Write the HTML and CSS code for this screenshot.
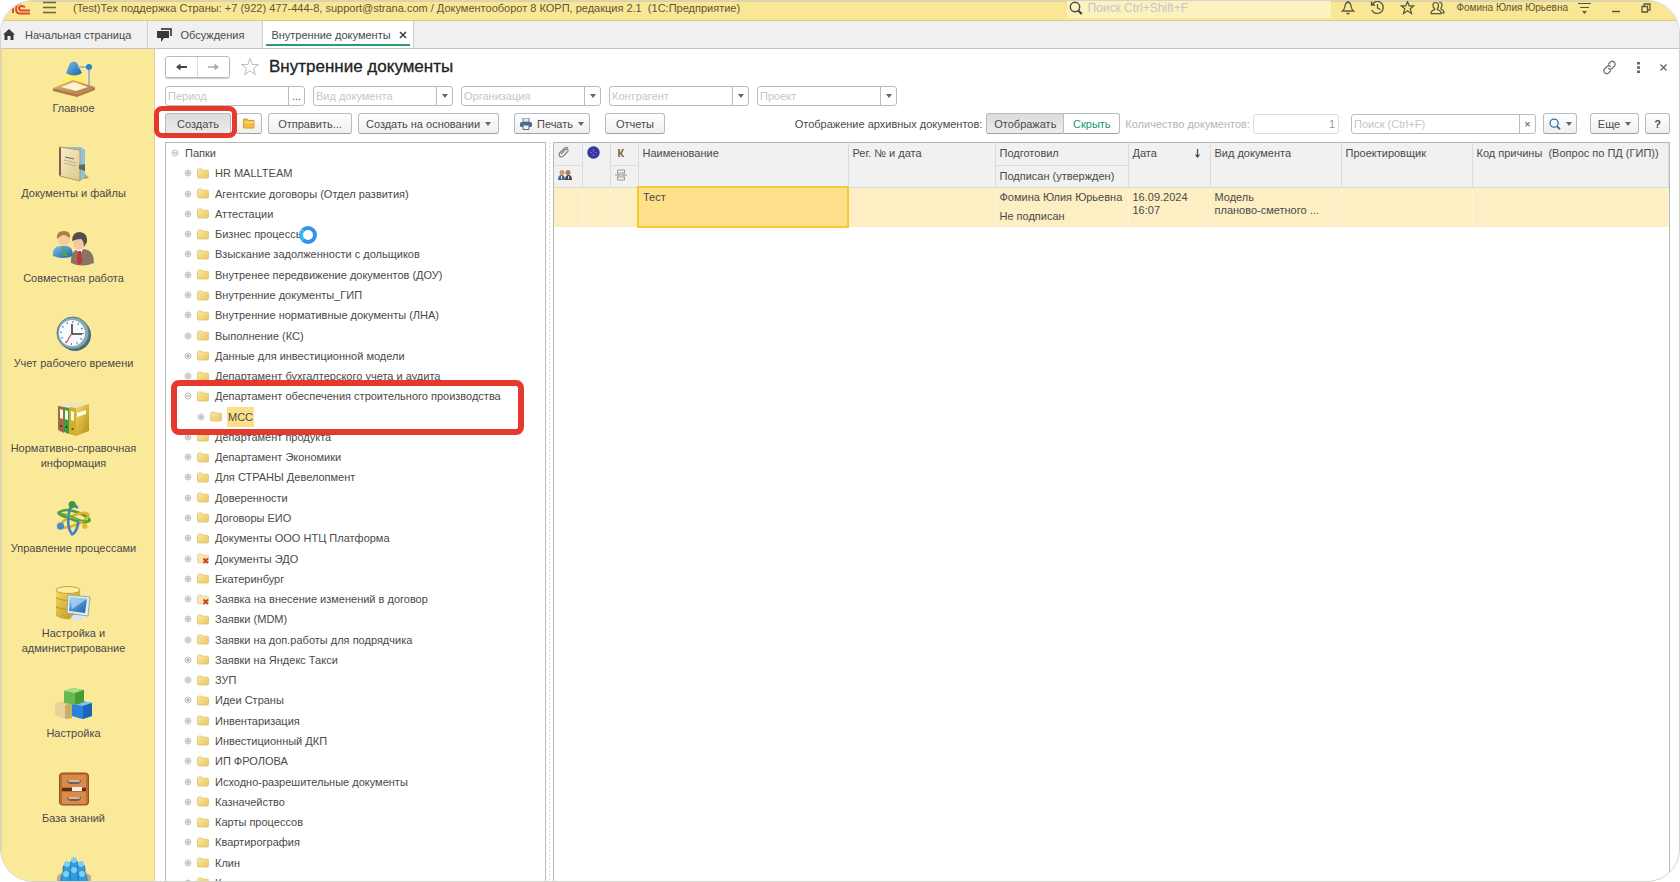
FILE: index.html
```
<!DOCTYPE html>
<html lang="ru">
<head>
    <meta charset="utf-8">
    <title>Внутренние документы</title>
    <link rel="stylesheet" href="styles.css">
</head>
<body>
    <!-- shared icons -->
    <svg class="sprite" width="0" height="0">
        <defs>
            <linearGradient id="g-folder" x1="0" y1="0" x2="1" y2="1">
                <stop offset="0" stop-color="#fbe9a0"/><stop offset="1" stop-color="#e9c763"/>
            </linearGradient>
            <linearGradient id="g-blue" x1="0" y1="0" x2="1" y2="1">
                <stop offset="0" stop-color="#7cc0ea"/><stop offset="1" stop-color="#1c62a8"/>
            </linearGradient>
            <linearGradient id="g-wood" x1="0" y1="0" x2="1" y2="1">
                <stop offset="0" stop-color="#e6bd85"/><stop offset="1" stop-color="#a9713c"/>
            </linearGradient>
            <linearGradient id="g-gold" x1="0" y1="0" x2="1" y2="1">
                <stop offset="0" stop-color="#f5da62"/><stop offset="1" stop-color="#b88d14"/>
            </linearGradient>
            <linearGradient id="g-page" x1="0" y1="0" x2="1" y2="1">
                <stop offset="0" stop-color="#f8efca"/><stop offset="1" stop-color="#dcc88c"/>
            </linearGradient>
        </defs>
        <symbol id="i-folder" viewBox="0 0 12 11">
            <path d="M.5 2.5q0-1.500 1.200-1.500h3l1 1.200h4.600q1.200 0 1.200 1.200v5.400q0 1.200-1.200 1.200h-8.600q-1.200 0-1.200-1.200z" fill="url(#g-folder)" stroke="#dfc26c" stroke-width=".8"/>
        </symbol>
        <symbol id="i-folder-del" viewBox="0 0 12 11">
            <path d="M.5 2.500q0-1.500 1.200-1.500h3l1 1.200h4.600q1.200 0 1.200 1.200v5.400q0 1.200-1.200 1.200h-8.600q-1.200 0-1.200-1.200z" fill="#f9e5ae" stroke="#e6cf94" stroke-width=".8"/>
            <path d="M6.500 5.500l4.500 4.500m0-4.500l-4.500 4.500" stroke="#c8402c" stroke-width="1.800"/>
        </symbol>
        <symbol id="i-plus" viewBox="0 0 8 8">
            <circle cx="4" cy="4" r="3" fill="#f4f4f4" stroke="#c2c2c2"/><path d="M2 4h4M4 2v4" stroke="#aaa"/>
        </symbol>
        <symbol id="i-minus" viewBox="0 0 8 8">
            <circle cx="4" cy="4" r="3" fill="#f6f6f6" stroke="#c2c2c2"/><path d="M2 4h4" stroke="#aaa"/>
        </symbol>
        <symbol id="i-star" viewBox="0 0 20 20">
            <path d="M10 1.500l2.300 6h6.200l-5 3.900 1.900 6.300-5.400-3.800-5.400 3.800 1.900-6.300-5-3.900h6.200z" fill="none" stroke="currentColor"/>
        </symbol>
        <symbol id="i-lens" viewBox="0 0 14 14">
            <circle cx="6" cy="6" r="4.700" fill="none" stroke="currentColor" stroke-width="1.400"/><path d="M9.200 9.500l3.600 3.500" stroke="currentColor" stroke-width="2.200"/>
        </symbol>
    </svg>

    <div class="window">
        <header class="topbar">
            <svg class="logo" width="24" height="14" viewBox="0 0 24 14">
                <path d="M2 2l4-2v12M23 12.500H13q-4 0-4-5 0-5 5-5.500M23 9.500H14q-2-.5-2-2.500 0-2 3-2l3 1" fill="none" stroke="#dc4a2a" stroke-width="2"/>
            </svg>
            <button class="icon-btn" aria-label="Меню">
                <svg width="13" height="13" viewBox="0 0 13 13"><path d="M0 1.500h13M0 6.500h13M0 11.500h13" stroke="#6b6540" stroke-width="1.300"/></svg>
            </button>
            <span class="app-title">(Test)Тех поддержка Страны: +7 (922) 477-444-8, support@strana.com / Документооборот 8 КОРП, редакция 2.1&nbsp; (1С:Предприятие)</span>
            <label class="global-search">
                <svg width="14" height="14"><use href="#i-lens"/></svg>
                <input type="text" aria-label="Глобальный поиск" placeholder="Поиск Ctrl+Shift+F">
            </label>
            <div class="top-icons">
                <button class="icon-btn" aria-label="Оповещения"><svg width="14" height="15" viewBox="0 0 14 15"><path d="M1.500 11q2-1.500 2.500-5 .5-3.500 3-4 2.500.5 3 4 .5 3.500 2.500 5z" fill="none" stroke="currentColor" stroke-width="1.300"/><path d="M5.500 13.500h3M7 0v2" stroke="currentColor" stroke-width="1.500"/></svg></button>
                <button class="icon-btn" aria-label="История"><svg width="15" height="15" viewBox="0 0 15 15"><path d="M2 4.500a6 6 0 1 1-.2 5.500M1.500 1.500v3.500h3.500M7.500 4v4l3 1.500" fill="none" stroke="currentColor" stroke-width="1.300"/></svg></button>
                <button class="icon-btn" aria-label="Избранное"><svg width="15" height="15" viewBox="0 0 15 15"><path d="M7.500 1.500l1.700 4.300h4.600l-3.600 2.900 1.300 4.800-4-2.800-4 2.800 1.300-4.800-3.600-2.900h4.600z" fill="none" stroke="currentColor" stroke-width="1.200"/></svg></button>
                <button class="user-btn">
                    <svg width="15" height="14" viewBox="0 0 15 14"><path d="M5.500 1.500q3 0 3 3 0 2-1.200 3v1.200q4 1 4 4h-10.300q0-3 3.500-4v-1.200q-1.500-1-1.500-3 0-3 2.500-3z" fill="none" stroke="currentColor" stroke-width="1.200"/><path d="M9 1q3 0 3 3 0 2-1 3v1q3 1 3 4h-2" fill="none" stroke="currentColor" stroke-width="1.200"/></svg>
                    Фомина Юлия Юрьевна
                </button>
                <button class="icon-btn" aria-label="Настройки"><svg width="13" height="14" viewBox="0 0 13 14"><path d="M0 2.500h13M2 6.500h9" stroke="currentColor" stroke-width="1.200"/><path d="M4 10h5l-2.500 3z" fill="currentColor"/></svg></button>
                <button class="icon-btn win-btn" aria-label="Свернуть"><svg width="10" height="10" viewBox="0 0 10 10"><path d="M1 8.500h8" stroke="currentColor" stroke-width="1.300"/></svg></button>
                <button class="icon-btn win-btn" aria-label="Восстановить"><svg width="10" height="10" viewBox="0 0 10 10"><path d="M1 3.500h5.500v5.500h-5.500zM3 3v-2h6v6h-2" fill="none" stroke="currentColor" stroke-width="1.300"/></svg></button>
            </div>
        </header>

        <nav class="tabs">
            <a class="tab tab-home" href="#">
                <svg width="14" height="13" viewBox="0 0 14 13"><path d="M7 1l6 5.500h-1.500v5.500h-3v-4h-3v4h-3v-5.500h-1.500z" fill="#3a3a3a"/></svg>
                Начальная страница
            </a>
            <a class="tab tab-talks" href="#">
                <svg width="15" height="14" viewBox="0 0 15 14"><path d="M4 0h11v8h-2v-6h-9z" fill="#555"/><path d="M0 3h12v7h-5l-3 4v-4h-4z" fill="#3a3a3a"/></svg>
                Обсуждения
            </a>
            <div class="tab active">
                <a href="#">Внутренние документы</a>
                <button class="icon-btn" aria-label="Закрыть вкладку"><svg width="8" height="8" viewBox="0 0 8 8"><path d="M1 1l6 6m0-6l-6 6" stroke="#444" stroke-width="1.600"/></svg></button>
            </div>
        </nav>

        <div class="body">
            <nav class="sidebar">
                <a href="#">
                    <svg width="44" height="36" viewBox="0 0 44 36">
                        <path d="M16 13h13l8 10h-29z" fill="#ffee6a"/>
                        <path d="M1 27l20-8 22 7-18 7z" fill="url(#g-wood)"/><path d="M9 26l13-5 14 5-12 4z" fill="#fff3cf"/>
                        <path d="M1 27l24 6v3l-24-6zM25 33l18-7v3l-18 7z" fill="#b07a45"/>
                        <path d="M18 2q4-3 7 0l5 10q-8 5-16 0z" fill="url(#g-blue)"/>
                        <path d="M26 6h11v18" fill="none" stroke="#a9b8c0" stroke-width="2"/><circle cx="37" cy="6" r="3" fill="#2c83bd"/>
                    </svg>
                    Главное
                </a>
                <a href="#">
                    <svg width="34" height="36" viewBox="0 0 34 36">
                        <path d="M22 34l11-2-4-4z" fill="#b99a50"/>
                        <path d="M4 1h21l4 3v27l-5 4z" fill="#8fc2d4"/><path d="M4 1l20 3v31l-20-5z" fill="url(#g-page)" stroke="#b49a5e"/>
                        <path d="M3 1v28l2 1v-28z" fill="#856040"/><path d="M9 11l9 2" stroke="#6d6350"/><path d="M8 14l12 3M8 17l12 3" stroke="#bdb08a"/><path d="M23 19l6-1v7l-6-2z" fill="#5c6b64"/>
                    </svg>
                    Документы и файлы
                </a>
                <a href="#">
                    <svg width="44" height="36" viewBox="0 0 44 36">
                        <path d="M1 25q-1-10 8-10h6q6 1 6 10-10 4-20 0z" fill="url(#g-blue)"/><path d="M10 15l3 3 3 7h-5z" fill="#55a058"/>
                        <ellipse cx="12" cy="8" rx="6" ry="7" fill="#f1cda1"/><path d="M5 8q-1-8 7-8 7 0 6 7-4-3-7-3-3 1-6 4z" fill="#b57c38"/>
                        <path d="M19 32q-1-14 10-14 13-1 13 14-12 5-23 0z" fill="#8a7564"/><path d="M24 18l4 6 3-6z" fill="#fff"/><path d="M26 20h3l1 11-3 3-2-3z" fill="#c43630"/>
                        <ellipse cx="27" cy="12" rx="6" ry="7" fill="#f0c9a2"/><path d="M20 10q0-9 8-9 8 1 7 10l-3 5q0-6-3-8-4 0-9 2z" fill="#554e50"/>
                    </svg>
                    Совместная работа
                </a>
                <a href="#">
                    <svg width="36" height="36" viewBox="0 0 36 36">
                        <circle cx="19" cy="19" r="16" fill="#496b7c"/><circle cx="17" cy="17" r="16" fill="#8aaab8" stroke="#587b8c"/><circle cx="16" cy="17" r="13" fill="#f5fbff"/>
                        <circle cx="16" cy="17" r="11" fill="none" stroke="#5f7480" stroke-width="2" stroke-dasharray="1 4.760"/>
                        <path d="M16 8v10h10" fill="none" stroke="#333" stroke-width="1.500"/><path d="M16 17l-6 10" stroke="#d8403a" stroke-width="1.200"/>
                    </svg>
                    Учет рабочего времени
                </a>
                <a href="#">
                    <svg width="34" height="36" viewBox="0 0 34 36">
                        <path d="M1 5l10-4 21 2-13 4z" fill="#e9e4c2"/>
                        <path d="M1 5l6 1v26l-6-3z" fill="#a26b43"/><path d="M7 6l5 1v26l-5-2z" fill="#3e9a45"/><path d="M12 6l7 1v28l-7-2z" fill="#d3b02b"/>
                        <path d="M19 7l13-4v27l-13 5z" fill="url(#g-gold)"/><path d="M20 12l9-3v4l-9 3zM3 8l3 1v9l-3-1zM8 9l3 1v9l-3-1zM14 10l3 1v9l-3-1z" fill="#fffbe6"/>
                        <circle cx="4" cy="25" r="1" fill="#3b2a20"/><circle cx="9.500" cy="26" r="1" fill="#153a18"/><circle cx="15.500" cy="28" r="1" fill="#4c3d10"/>
                    </svg>
                    Нормативно-справочная информация
                </a>
                <a href="#">
                    <svg width="38" height="40" viewBox="0 0 38 40">
                        <path d="M2 13q8-6 22 0 14 6 12 9-6 4-20-2-15-5-14-7z" fill="none" stroke="#4f9d3c" stroke-width="3"/>
                        <path d="M4 28q0-6 14-12 14-5 17-1 1 4-11 10-15 7-20 3z" fill="none" stroke="#e0b32b" stroke-width="3"/>
                        <path d="M23 8q-5-8-9 2-4 19 3 27 5-2 7-14" fill="none" stroke="#4184c4" stroke-width="3"/>
                        <path d="M5 14q8 1 18 6 7 3 11 2" fill="none" stroke="#5bad43" stroke-width="2"/>
                        <circle cx="17" cy="4" r="4" fill="#3f9a3b"/><circle cx="4" cy="28" r="4" fill="#4a8bc8"/><circle cx="31" cy="28" r="3" fill="#e7b92d"/>
                    </svg>
                    Управление процессами
                </a>
                <a href="#">
                    <svg width="38" height="36" viewBox="0 0 38 36">
                        <path d="M1 4v26q10 6 24 1v-27z" fill="url(#g-gold)"/><ellipse cx="13" cy="4" rx="12" ry="3.500" fill="#fbeea2" stroke="#c9a22c"/>
                        <path d="M1 12q12 5 24 0M1 21q12 5 24 0" fill="none" stroke="#c0951d"/>
                        <path d="M18 29h9l3 4q-7 4-15 0z" fill="#dde4e6"/><path d="M13 9l22 2-2 19-21-3z" fill="#e6edf0" stroke="#9aa9b2"/><path d="M15 11l17 2-2 14-16-2z" fill="url(#g-blue)"/><path d="M15 11l17 2-15 10z" fill="#b9dcf2" opacity=".7"/>
                    </svg>
                    Настройка и администрирование
                </a>
                <a href="#">
                    <svg width="40" height="32" viewBox="0 0 40 32">
                        <path d="M1 15l9-2 8 2v15l-7 1-10-4z" fill="#e8d49a"/><path d="M11 17l7-2v15l-7 1z" fill="#c8ad68"/>
                        <path d="M18 16l10-3 10 2v13l-10 3-10-3z" fill="#2b82db"/><path d="M18 16l10-3 10 2-9 3z" fill="#80bdf2"/><path d="M29 18l9-3v13l-9 3z" fill="#1766b7"/>
                        <path d="M10 3l9-3 11 2v12l-9 3-11-2z" fill="#68b94d"/><path d="M10 3l9-3 11 2-9 3z" fill="#a5e083"/><path d="M21 5l9-3v12l-9 3z" fill="#479b35"/>
                    </svg>
                    Настройка
                </a>
                <a href="#">
                    <svg width="30" height="34" viewBox="0 0 30 34">
                        <rect x=".5" y="1" width="29" height="32" rx="3" fill="#bd6c33" stroke="#944d1f"/><rect x="3" y="3" width="24" height="12" rx="1" fill="#d98b4c"/><rect x="3" y="20" width="24" height="12" rx="1" fill="#d98b4c"/>
                        <path d="M3 16h24v3h-24z" fill="#5d3012"/><path d="M13 15h10v4h-10z" fill="#f5f1e8"/>
                        <path d="M9 8q0 3 3 3h6q3 0 3-3M9 25q0 3 3 3h6q3 0 3-3" fill="none" stroke="#6b625c" stroke-width="2"/><path d="M9 9h12M9 26h12" stroke="#e7ddd0"/>
                    </svg>
                    База знаний
                </a>
                <a href="#" aria-label="Администрирование">
                    <svg width="38" height="36" viewBox="0 0 38 36">
                        <path d="M2 20l7-5h20l7 5v14h-34z" fill="#b8ad95"/>
                        <g fill="#2f9ddb" stroke="#1c6fae" stroke-width=".7"><rect x="15" y="4" width="8" height="16" rx="4"/><rect x="8" y="8" width="8" height="18" rx="4"/><rect x="22" y="8" width="8" height="18" rx="4"/><rect x="15" y="14" width="8" height="20" rx="4"/><rect x="6" y="18" width="9" height="18" rx="4"/><rect x="23" y="18" width="9" height="18" rx="4"/></g>
                        <g fill="#82cdf3"><circle cx="19" cy="4" r="3"/><circle cx="12" cy="8" r="3"/><circle cx="26" cy="8" r="3"/><circle cx="19" cy="14" r="3"/><circle cx="11" cy="18" r="3"/><circle cx="27" cy="18" r="3"/></g>
                    </svg>
                </a>
            </nav>

            <main class="content">
                <div class="heading">
                    <div class="nav-buttons">
                        <button aria-label="Назад"><svg width="13" height="10" viewBox="0 0 13 10"><path d="M12 5H3" stroke="#444" stroke-width="2"/><path d="M5.500 1.500L1 5l4.500 3.500z" fill="#444"/></svg></button>
                        <button aria-label="Вперед"><svg width="13" height="10" viewBox="0 0 13 10"><path d="M1 5h9" stroke="#aaa" stroke-width="1.600"/><path d="M7.500 1.500L12 5l-4.500 3.500z" fill="#aaa"/></svg></button>
                    </div>
                    <button class="icon-btn fav" aria-label="В избранное"><svg width="20" height="20"><use href="#i-star"/></svg></button>
                    <h1>Внутренние документы</h1>
                    <div class="heading-tools">
                        <button class="icon-btn" aria-label="Ссылка"><svg width="15" height="15" viewBox="0 0 15 15"><g fill="none" stroke="#777" stroke-width="1.300"><path d="M6 4.500l2.500-2.500q2-1.500 3.800.2 1.700 2 .2 3.800l-2.500 2.500q-2 1.500-3.800-.2"/><path d="M9 10.500l-2.500 2.500q-2 1.500-3.800-.2-1.700-2-.2-3.800l2.500-2.500q2-1.500 3.800.2"/></g></svg></button>
                        <button class="icon-btn" aria-label="Действия"><svg width="3" height="11" viewBox="0 0 3 11"><path d="M0 0h3v2.500h-3zM0 4.200h3v2.500h-3zM0 8.400h3v2.500h-3z" fill="#666"/></svg></button>
                        <button class="icon-btn" aria-label="Закрыть"><svg width="7" height="7" viewBox="0 0 7 7"><path d="M.5.5l6 6m0-6l-6 6" stroke="#666" stroke-width="1.300"/></svg></button>
                    </div>
                </div>

                <div class="filters">
                    <div class="field"><input type="text" aria-label="Период" placeholder="Период"><button aria-label="Выбрать период">...</button></div>
                    <div class="field"><input type="text" aria-label="Вид документа" placeholder="Вид документа"><button class="arrow" aria-label="Выбрать вид"></button></div>
                    <div class="field"><input type="text" aria-label="Организация" placeholder="Организация"><button class="arrow" aria-label="Выбрать организацию"></button></div>
                    <div class="field"><input type="text" aria-label="Контрагент" placeholder="Контрагент"><button class="arrow" aria-label="Выбрать контрагента"></button></div>
                    <div class="field"><input type="text" aria-label="Проект" placeholder="Проект"><button class="arrow" aria-label="Выбрать проект"></button></div>
                </div>

                <div class="toolbar">
                    <div class="create-wrap">
                        <button class="btn pressed btn-create">Создать</button>
                        <span class="mark mark-create"></span>
                    </div>
                    <button class="btn btn-folder" aria-label="Создать папку"><svg width="12" height="11" viewBox="0 0 12 11"><path d="M.5 1h4l1 1.500h5.500v7.500h-10.500z" fill="#f3bd4c" stroke="#d99b28"/><path d="M1 4.500h10" stroke="#fbe09a"/></svg></button>
                    <button class="btn btn-send">Отправить...</button>
                    <button class="btn btn-base arrow">Создать на основании</button>
                    <button class="btn btn-print arrow"><svg width="12" height="12" viewBox="0 0 12 12"><path d="M3 0h6v4h-6z" fill="#dfe8ef" stroke="#6d8599"/><rect y="4" width="12" height="5" rx="1.500" fill="#4a6d8b"/><path d="M3 7h6v4.500h-6z" fill="#eef3f7" stroke="#4a6d8b"/></svg>Печать</button>
                    <button class="btn btn-reports">Отчеты</button>

                    <div class="archive">
                        <span class="caption">Отображение архивных документов:</span>
                        <div class="switch">
                            <button class="btn pressed">Отображать</button>
                            <button class="btn chosen">Скрыть</button>
                        </div>
                    </div>
                    <div class="counter">
                        <label for="count">Количество документов:</label>
                        <input id="count" type="text" value="1" readonly>
                    </div>
                    <div class="field list-search"><input type="text" aria-label="Поиск" placeholder="Поиск (Ctrl+F)"><button aria-label="Очистить">×</button></div>
                    <button class="btn btn-find arrow" aria-label="Найти"><svg width="12" height="12"><use href="#i-lens"/></svg></button>
                    <button class="btn btn-more arrow">Еще</button>
                    <button class="btn btn-help">?</button>
                </div>

                <div class="panes">
                    <div class="tree-pane">
                        <ul class="tree">
                            <li class="root"><svg width="8" height="8"><use href="#i-minus"/></svg><span>Папки</span></li>
                            <li><svg width="8" height="8"><use href="#i-plus"/></svg><svg width="12" height="11"><use href="#i-folder"/></svg><span>HR MALLTEAM</span></li>
                            <li><svg width="8" height="8"><use href="#i-plus"/></svg><svg width="12" height="11"><use href="#i-folder"/></svg><span>Агентские договоры (Отдел развития)</span></li>
                            <li><svg width="8" height="8"><use href="#i-plus"/></svg><svg width="12" height="11"><use href="#i-folder"/></svg><span>Аттестации</span></li>
                            <li><svg width="8" height="8"><use href="#i-plus"/></svg><svg width="12" height="11"><use href="#i-folder"/></svg><span>Бизнес процессы<i class="spinner"></i></span></li>
                            <li><svg width="8" height="8"><use href="#i-plus"/></svg><svg width="12" height="11"><use href="#i-folder"/></svg><span>Взыскание задолженности с дольщиков</span></li>
                            <li><svg width="8" height="8"><use href="#i-plus"/></svg><svg width="12" height="11"><use href="#i-folder"/></svg><span>Внутренее передвижение документов (ДОУ)</span></li>
                            <li><svg width="8" height="8"><use href="#i-plus"/></svg><svg width="12" height="11"><use href="#i-folder"/></svg><span>Внутренние документы_ГИП</span></li>
                            <li><svg width="8" height="8"><use href="#i-plus"/></svg><svg width="12" height="11"><use href="#i-folder"/></svg><span>Внутренние нормативные документы (ЛНА)</span></li>
                            <li><svg width="8" height="8"><use href="#i-plus"/></svg><svg width="12" height="11"><use href="#i-folder"/></svg><span>Выполнение (КС)</span></li>
                            <li><svg width="8" height="8"><use href="#i-plus"/></svg><svg width="12" height="11"><use href="#i-folder"/></svg><span>Данные для инвестиционной модели</span></li>
                            <li><svg width="8" height="8"><use href="#i-plus"/></svg><svg width="12" height="11"><use href="#i-folder"/></svg><span>Департамент бухгалтерского учета и аудита</span></li>
                            <li class="marked"><svg width="8" height="8"><use href="#i-minus"/></svg><svg width="12" height="11"><use href="#i-folder"/></svg><span>Департамент обеспечения строительного производства</span><span class="mark mark-branch"></span></li>
                            <li class="child"><svg width="8" height="8"><use href="#i-plus"/></svg><svg width="12" height="11"><use href="#i-folder"/></svg><span class="current">МСС</span></li>
                            <li><svg width="8" height="8"><use href="#i-plus"/></svg><svg width="12" height="11"><use href="#i-folder"/></svg><span>Департамент продукта</span></li>
                            <li><svg width="8" height="8"><use href="#i-plus"/></svg><svg width="12" height="11"><use href="#i-folder"/></svg><span>Департамент Экономики</span></li>
                            <li><svg width="8" height="8"><use href="#i-plus"/></svg><svg width="12" height="11"><use href="#i-folder"/></svg><span>Для СТРАНЫ Девелопмент</span></li>
                            <li><svg width="8" height="8"><use href="#i-plus"/></svg><svg width="12" height="11"><use href="#i-folder"/></svg><span>Доверенности</span></li>
                            <li><svg width="8" height="8"><use href="#i-plus"/></svg><svg width="12" height="11"><use href="#i-folder"/></svg><span>Договоры ЕИО</span></li>
                            <li><svg width="8" height="8"><use href="#i-plus"/></svg><svg width="12" height="11"><use href="#i-folder"/></svg><span>Документы ООО НТЦ Платформа</span></li>
                            <li><svg width="8" height="8"><use href="#i-plus"/></svg><svg width="12" height="11"><use href="#i-folder-del"/></svg><span>Документы ЭДО</span></li>
                            <li><svg width="8" height="8"><use href="#i-plus"/></svg><svg width="12" height="11"><use href="#i-folder"/></svg><span>Екатеринбург</span></li>
                            <li><svg width="8" height="8"><use href="#i-plus"/></svg><svg width="12" height="11"><use href="#i-folder-del"/></svg><span>Заявка на внесение изменений в договор</span></li>
                            <li><svg width="8" height="8"><use href="#i-plus"/></svg><svg width="12" height="11"><use href="#i-folder"/></svg><span>Заявки (MDM)</span></li>
                            <li><svg width="8" height="8"><use href="#i-plus"/></svg><svg width="12" height="11"><use href="#i-folder"/></svg><span>Заявки на доп.работы для подрядчика</span></li>
                            <li><svg width="8" height="8"><use href="#i-plus"/></svg><svg width="12" height="11"><use href="#i-folder"/></svg><span>Заявки на Яндекс Такси</span></li>
                            <li><svg width="8" height="8"><use href="#i-plus"/></svg><svg width="12" height="11"><use href="#i-folder"/></svg><span>ЗУП</span></li>
                            <li><svg width="8" height="8"><use href="#i-plus"/></svg><svg width="12" height="11"><use href="#i-folder"/></svg><span>Идеи Страны</span></li>
                            <li><svg width="8" height="8"><use href="#i-plus"/></svg><svg width="12" height="11"><use href="#i-folder"/></svg><span>Инвентаризация</span></li>
                            <li><svg width="8" height="8"><use href="#i-plus"/></svg><svg width="12" height="11"><use href="#i-folder"/></svg><span>Инвестиционный ДКП</span></li>
                            <li><svg width="8" height="8"><use href="#i-plus"/></svg><svg width="12" height="11"><use href="#i-folder"/></svg><span>ИП ФРОЛОВА</span></li>
                            <li><svg width="8" height="8"><use href="#i-plus"/></svg><svg width="12" height="11"><use href="#i-folder"/></svg><span>Исходно-разрешительные документы</span></li>
                            <li><svg width="8" height="8"><use href="#i-plus"/></svg><svg width="12" height="11"><use href="#i-folder"/></svg><span>Казначейство</span></li>
                            <li><svg width="8" height="8"><use href="#i-plus"/></svg><svg width="12" height="11"><use href="#i-folder"/></svg><span>Карты процессов</span></li>
                            <li><svg width="8" height="8"><use href="#i-plus"/></svg><svg width="12" height="11"><use href="#i-folder"/></svg><span>Квартирография</span></li>
                            <li><svg width="8" height="8"><use href="#i-plus"/></svg><svg width="12" height="11"><use href="#i-folder"/></svg><span>Клин</span></li>
                            <li><svg width="8" height="8"><use href="#i-plus"/></svg><svg width="12" height="11"><use href="#i-folder"/></svg><span>К</span></li>
                        </ul>
                    </div>
                    <div class="splitter"></div>
                    <div class="list-pane">
                        <table>
                            <colgroup>
                                <col class="c-icon"><col class="c-icon"><col class="c-icon"><col class="c-name"><col class="c-reg"><col class="c-author"><col class="c-date"><col class="c-kind"><col class="c-kind"><col>
                            </colgroup>
                            <thead>
                                <tr>
                                    <th><svg width="12" height="12" viewBox="0 0 12 12"><path d="M3 8l4.500-4.500q1.500-1 2.200 0 .8 1-.2 2.200l-4.500 4.500q-2 1.300-3.300 0-1.300-1.700.2-3.400l4.600-4.600q2-1.500 3.500-.5" fill="none" stroke="#888" stroke-width="1.300"/></svg></th>
                                    <th rowspan="2"><svg width="13" height="13" viewBox="0 0 13 13"><circle cx="6.500" cy="6.500" r="6.200" fill="#38389c"/><path d="M6.500 3v2.500M6.500 8v2M3.500 6.500h1.500M8 6.500h1.500" stroke="#7272cc" stroke-width="1.200"/></svg></th>
                                    <th class="letter">К</th>
                                    <th rowspan="2">Наименование</th>
                                    <th rowspan="2">Рег. № и дата</th>
                                    <th>Подготовил</th>
                                    <th rowspan="2"><span class="sorted">Дата <svg width="7" height="9" viewBox="0 0 7 9"><path d="M3.500 0v8M1.500 5.500l2 2.500 2-2.500" fill="none" stroke="#444" stroke-width="1.200"/></svg></span></th>
                                    <th rowspan="2">Вид документа</th>
                                    <th rowspan="2">Проектировщик</th>
                                    <th rowspan="2">Код причины&nbsp; (Вопрос по ПД (ГИП))</th>
                                </tr>
                                <tr>
                                    <th><svg width="14" height="12" viewBox="0 0 14 12"><path d="M0 11q0-5 3.500-5 3.500 0 3.500 5z" fill="#3f6a94"/><path d="M7 11q0-5 3.500-5 3.500 0 3.500 5z" fill="#4c4350"/><circle cx="4" cy="3.500" r="2.500" fill="#c99a62"/><circle cx="10" cy="3.500" r="2.500" fill="#a87c58"/><path d="M3.500 7v3M10.500 7v3" stroke="#e9e2dc"/></svg></th>
                                    <th><svg width="12" height="12" viewBox="0 0 12 12"><path d="M2.500 4v-3h7v3M2.500 8v3h7v-3M0 6h12M3 4h6v4h-6z" fill="none" stroke="#999"/></svg></th>
                                    <th>Подписан (утвержден)</th>
                                </tr>
                            </thead>
                            <tbody>
                                <tr>
                                    <td></td><td></td><td></td>
                                    <td class="current" rowspan="2">Тест</td>
                                    <td rowspan="2"></td>
                                    <td>Фомина Юлия Юрьевна</td>
                                    <td rowspan="2">16.09.2024<br>16:07</td>
                                    <td rowspan="2">Модель<br>планово-сметного ...</td>
                                    <td rowspan="2"></td>
                                    <td rowspan="2"></td>
                                </tr>
                                <tr>
                                    <td></td><td></td><td></td>
                                    <td>Не подписан</td>
                                </tr>
                            </tbody>
                        </table>
                    </div>
                </div>
            </main>
        </div>
    </div>
</body>
</html>
```
FILE: styles.css
```
* {
    box-sizing: border-box;
}

body {
    margin: 0;
    background-color: #fff;
    font-family: "Liberation Sans", Arial, sans-serif;
    font-size: 11px;
    color: #4a4a4a;
}

button, input {
    font: inherit;
    color: inherit;
    margin: 0;
}

a {
    color: inherit;
    text-decoration: none;
}

svg {
    flex: none;
}

.sprite {
    position: absolute;
}

.window {
    display: flex;
    flex-direction: column;
    height: 100vh;
    overflow: hidden;
    border: 1px solid #d5d3cc;
    border-radius: 33px;
    background-color: #fff;
}

.icon-btn {
    display: flex;
    align-items: center;
    justify-content: center;
    padding: 0;
    border: 0;
    background: none;
}

/* title bar */
.topbar {
    display: flex;
    align-items: center;
    flex: none;
    height: 20px;
    padding: 0 28px 7px 6px;
    background-color: #f9e795;
    border-top: 1px solid #e3d488;
    border-bottom: 1px solid #d9ca85;
    color: #5c573a;
}

.logo {
    margin-right: 12px;
}

.app-title {
    margin-left: 17px;
    line-height: 14px;
    white-space: nowrap;
}

.global-search {
    display: flex;
    align-items: center;
    gap: 4px;
    width: 264px;
    height: 20px;
    margin-left: auto;
    padding-left: 2px;
    background-color: #fcf2c0;
    color: #444;
}

.global-search input {
    flex: 1;
    min-width: 0;
    padding: 0;
    border: 0;
    background: none;
    font-size: 12px;
}

input::placeholder {
    color: #c6c6c6;
    opacity: 1;
}

.top-icons {
    display: flex;
    align-items: center;
    gap: 15px;
    margin-left: 10px;
}

.user-btn {
    display: flex;
    align-items: center;
    gap: 11px;
    margin-right: -5px;
    padding: 0;
    border: 0;
    background: none;
    font-size: 10px;
    line-height: 14px;
    white-space: nowrap;
}

.win-btn {
    margin-left: 5px;
}

/* open windows */
.tabs {
    display: flex;
    flex: none;
    height: 28px;
    background-color: #f1f0f0;
    border-bottom: 1px solid #c9c3c3;
}

.tab {
    display: flex;
    align-items: center;
    border-right: 1px solid #cfcfcf;
}

.tab-home {
    gap: 9px;
    padding: 0 16px 0 1px;
}

.tab-talks {
    gap: 8px;
    padding: 0 18px 0 9px;
}

.tab.active {
    gap: 8px;
    padding: 0 6px 0 8px;
    background: linear-gradient(#2a9d6c, #2a9d6c) center bottom 2px / calc(100% - 6px) 2px no-repeat #fff;
}

.body {
    display: flex;
    flex: 1;
    min-height: 0;
}

/* sections */
.sidebar {
    display: flex;
    flex-direction: column;
    align-items: center;
    gap: 30px;
    flex: none;
    width: 154px;
    padding: 12px 14px 0 5px;
    overflow: hidden;
    background-color: #fbe99a;
    border-left: 1px solid #e8d68c;
    border-right: 1px solid #e0d2a0;
    line-height: 15px;
    text-align: center;
}

.sidebar a {
    display: flex;
    flex-direction: column;
    align-items: center;
    gap: 4px;
}

.sidebar svg {
    height: 36px;
}

/* form */
.content {
    display: flex;
    flex-direction: column;
    flex: 1;
    min-width: 0;
    padding: 7px 9px 0 10px;
}

.heading {
    display: flex;
    align-items: center;
    height: 22px;
}

.nav-buttons {
    display: flex;
    width: 65px;
    height: 22px;
    border: 1px solid #b9b9b9;
    border-radius: 3px;
    box-shadow: 0 1px 1px #ccc;
}

.nav-buttons button {
    display: flex;
    align-items: center;
    justify-content: center;
    flex: 1;
    padding: 0;
    border: 0;
    background: none;
}

.nav-buttons button + button {
    border-left: 1px solid #ddd;
}

.fav {
    margin: 0 9px 0 10px;
    color: #bbb;
}

h1 {
    margin: 0;
    font-size: 17px;
    font-weight: normal;
    color: #222;
    -webkit-text-stroke: 0.3px #222;
}

.heading-tools {
    display: flex;
    align-items: center;
    gap: 20px;
    margin-left: auto;
    padding-right: 3px;
}

.filters {
    display: flex;
    gap: 8px;
    margin-top: 8px;
}

.field {
    display: flex;
    width: 140px;
    height: 20px;
    border: 1px solid #bcbcbc;
    border-radius: 3px;
    background-color: #fff;
}

.field input {
    flex: 1;
    min-width: 0;
    padding: 0 2px;
    border: 0;
    background: none;
}

.field button {
    display: flex;
    align-items: center;
    justify-content: center;
    width: 16px;
    padding: 0;
    border: 0;
    border-left: 1px solid #bcbcbc;
    background: none;
}

.arrow::after {
    content: "";
    border: 3px solid transparent;
    border-top: 4px solid #666;
    border-bottom: 0;
}

.toolbar {
    display: flex;
    align-items: center;
    height: 21px;
    margin-top: 7px;
}

.btn {
    display: flex;
    align-items: center;
    justify-content: center;
    gap: 5px;
    height: 21px;
    padding: 0;
    border: 1px solid #bcbcbc;
    border-bottom-color: #a0a0a0;
    border-radius: 3px;
    background: linear-gradient(#fff, #efefef);
    white-space: nowrap;
}

.btn.pressed {
    background: linear-gradient(#dcdcdc, #ececec);
}

.create-wrap {
    position: relative;
}

.btn-create {
    width: 66px;
}

.btn-folder {
    width: 26px;
    margin-left: 5px;
}

.btn-send {
    width: 84px;
    margin-left: 6px;
}

.btn-base {
    width: 141px;
    margin-left: 6px;
}

.btn-print {
    width: 76px;
    margin-left: 15px;
}

.btn-reports {
    width: 60px;
    margin-left: 15px;
}

.archive {
    display: flex;
    align-items: center;
    gap: 4px;
    margin-left: auto;
    white-space: nowrap;
}

.switch {
    display: flex;
}

.switch .btn {
    width: 78px;
    border-radius: 3px 0 0 3px;
}

.switch .chosen {
    width: 56px;
    border-left: 0;
    border-radius: 0 3px 3px 0;
    background: #fff;
    color: #17996a;
}

.counter {
    display: flex;
    align-items: center;
    gap: 3px;
    margin-left: 5px;
    color: #b5b5b5;
    white-space: nowrap;
}

.counter input {
    width: 86px;
    height: 20px;
    padding: 0 3px;
    border: 1px solid #ddd;
    border-radius: 3px;
    color: #999;
    text-align: right;
}

.list-search {
    width: 185px;
    margin-left: 12px;
}

.btn-find {
    width: 34px;
    margin-left: 7px;
    color: #2b6ca3;
}

.btn-more {
    width: 49px;
    margin-left: 13px;
}

.btn-help {
    width: 25px;
    margin-left: 6px;
    font-weight: bold;
}

/* lower part */
.panes {
    display: flex;
    flex: 1;
    min-height: 0;
    margin-top: 8px;
}

.tree-pane {
    width: 381px;
    border: 1px solid #b8b8b8;
    border-bottom: 0;
}

.tree {
    display: grid;
    grid-auto-rows: 1fr;
    height: calc(100% + 12px);
    margin: 0;
    padding: 0;
    list-style: none;
}

.tree li {
    position: relative;
    display: flex;
    align-items: center;
    min-height: 0;
    padding-left: 18px;
    white-space: nowrap;
}

.tree li.root {
    padding-left: 5px;
}

.tree li.child {
    padding-left: 31px;
}

.tree svg + svg {
    margin-left: 5px;
}

.tree span {
    position: relative;
    margin-left: 5px;
    padding: 3px 1px;
    line-height: 14px;
}

.tree .current {
    background-color: #fbe08a;
}

.spinner {
    position: absolute;
    right: -12px;
    top: 2px;
    width: 18px;
    height: 18px;
    border: 4px solid #2f94ea;
    border-left-color: #38b6f2;
    border-radius: 50%;
    background-color: #fff;
}

/* red frames over the controls */
.mark,
.tree .mark {
    position: absolute;
    z-index: 1;
    margin: 0;
    padding: 0;
    border: 6px solid #e5382e;
    border-radius: 8px;
    pointer-events: none;
}

.mark-create {
    left: -11px;
    right: -6px;
    top: -7px;
    bottom: -4px;
    border-width: 5px;
}

.tree .mark-branch {
    left: 5px;
    right: 21px;
    top: -6px;
    height: 55px;
}

.splitter {
    width: 7px;
    background: repeating-linear-gradient(#ddd 0 2px, transparent 2px 4px) center / 1px 100% no-repeat;
}

.list-pane {
    flex: 1;
    min-width: 0;
    border: 1px solid #b8b8b8;
    border-bottom: 0;
}

table {
    width: 100%;
    table-layout: fixed;
    border-collapse: collapse;
}

.c-icon {
    width: 28px;
}

.c-name {
    width: 210px;
}

.c-reg {
    width: 147px;
}

.c-author {
    width: 133px;
}

.c-date {
    width: 82px;
}

.c-kind {
    width: 131px;
}

th {
    height: 22px;
    padding: 3px 4px;
    border: 1px solid #dcdcdc;
    border-top: 0;
    background-color: #f1f1f1;
    font-weight: normal;
    line-height: 14px;
    text-align: left;
    vertical-align: top;
    white-space: nowrap;
}

th:first-child {
    border-left: 0;
}

th > svg {
    display: block;
}

.letter {
    padding-left: 7px;
    font-weight: bold;
    color: #7a6030;
}

.sorted {
    display: flex;
    align-items: center;
    justify-content: space-between;
    padding-right: 5px;
}

td {
    height: 20px;
    padding: 3px 4px;
    border-right: 1px solid #fbf3dc;
    background-color: #feeec4;
    line-height: 13px;
    vertical-align: top;
    white-space: nowrap;
}

td.current {
    border: 2px solid #f6ca35;
    background-color: #fee08a;
}
```
